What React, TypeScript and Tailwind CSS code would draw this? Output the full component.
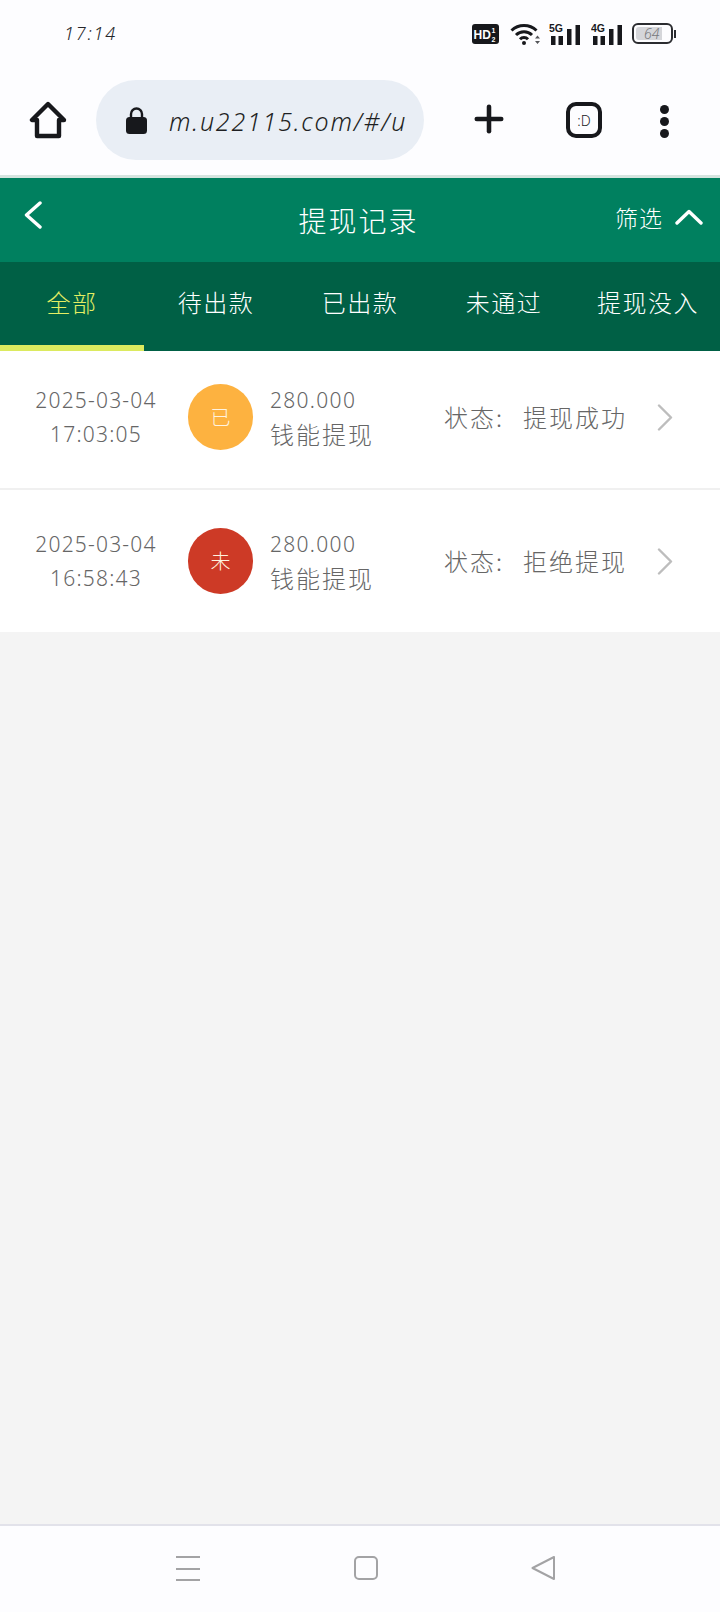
import { Plus } from 'lucide-react';

const cjk = '[font-family:"Noto_Sans_CJK_SC","Liberation_Sans",sans-serif]';

const tabs = ['全部', '待出款', '已出款', '未通过', '提现没入'];

const records = [
  { date: '2025-03-04', time: '17:03:05', badge: '已', color: 'bg-[#fdb240]', amount: '280.000', status: '提现成功', rowClass: 'h-[139px] pb-[5px] border-b-2 border-[#f0f0f0]' },
  { date: '2025-03-04', time: '16:58:43', badge: '未', color: 'bg-[#cd3a26]', amount: '280.000', status: '拒绝提现', rowClass: 'h-[142px]' },
];

function SignalIcon({ label }: { label: string }) {
  return (
    <svg width="32" height="24" viewBox="0 0 32 24" fill="#17181c">
      <text x="0" y="10" fontSize="10.5" fontWeight="700" fontFamily="Liberation Sans">
        {label}
      </text>
      <rect x="2" y="14" width="4.5" height="9" />
      <rect x="9.5" y="14" width="4.5" height="9" />
      <rect x="18" y="7" width="4.5" height="16" />
      <rect x="26.5" y="3" width="4.5" height="20" />
    </svg>
  );
}

function StatusBar() {
  return (
    <div className="flex h-[66px] items-center justify-between pl-[64px] pr-[44px] pt-[1px]">
      <span className="text-[18px] font-light italic tracking-[1.8px] text-[#25262a] [font-family:'Noto_Sans',sans-serif]">17:14</span>
      <div className="flex items-center">
        <svg width="27" height="22" viewBox="0 0 27 22">
          <rect width="27" height="20" y="1" rx="3" fill="#17181c" />
          <text x="1.5" y="15.5" fontSize="12" fontWeight="700" fill="#fff" fontFamily="Liberation Sans">HD</text>
          <text x="19.5" y="9.5" fontSize="7" fontWeight="700" fill="#fff" fontFamily="Liberation Sans">1</text>
          <text x="19.5" y="18.5" fontSize="7" fontWeight="700" fill="#fff" fontFamily="Liberation Sans">2</text>
        </svg>
        <svg className="ml-[11px]" width="31" height="24" viewBox="0 0 31 24" fill="none" stroke="#17181c" strokeWidth="3">
          <path d="M1.5 8.5a18 18 0 0 1 25 0" />
          <path d="M6 13a11.5 11.5 0 0 1 16 0" />
          <path d="M10 17.2a5.5 5.5 0 0 1 8 0" />
          <circle cx="14" cy="21" r="2" fill="#17181c" stroke="none" />
          <path d="M25 16.5l2.5-3 2.5 3zM25 19l2.5 3 2.5-3z" fill="#55565a" stroke="none" />
        </svg>
        <div className="ml-[8px]">
          <SignalIcon label="5G" />
        </div>
        <div className="ml-[10px]">
          <SignalIcon label="4G" />
        </div>
        <div className="relative ml-[9px] flex h-[21px] w-[41px] items-center rounded-[6px] border-2 border-[#2b2c30] p-[2px]">
          <div className="h-full w-[26px] rounded-l-[3px] bg-[#d5d6da]" />
          <span className="absolute left-[10px] top-[-2px] text-[14px] font-light italic text-[#77787c] [font-family:'Noto_Sans',sans-serif]">64</span>
        </div>
        <div className="ml-[1px] h-[8px] w-[2px] bg-[#2b2c30]" />
      </div>
    </div>
  );
}

function BrowserBar() {
  return (
    <div className="flex h-[112px] items-start border-b-[3px] border-[#d5e4df] pl-[29px] pt-[14px]">
      <svg className="mt-[21px]" width="38" height="38" viewBox="0 0 38 38" fill="none" stroke="#17181c" strokeWidth="4.4" strokeLinejoin="round">
        <path d="M19 3 3 19h5v16h22V19h5z" />
      </svg>
      <div className="ml-[29px] flex h-[80px] w-[328px] items-center rounded-[40px] bg-[#e9eef5] pl-[30px]">
        <svg width="21" height="27" viewBox="0 0 21 27">
          <path d="M5 12V7a5.5 5.5 0 0 1 11 0v5" fill="none" stroke="#17181c" strokeWidth="2.4" />
          <rect y="10" width="21" height="17" rx="3.5" fill="#17181c" />
        </svg>
        <span className="ml-[22px] mt-[4px] whitespace-nowrap text-[25px] font-light italic tracking-[1.8px] text-[#1e1f23] [font-family:'Noto_Sans',sans-serif]">m.u22115.com/#/u</span>
      </div>
      <Plus className="ml-[44px] mt-[18px] text-[#17181c]" size={42} strokeWidth={2.6} />
      <div className="ml-[56px] mt-[22px] flex h-[36px] w-[36px] items-center justify-center rounded-[10px] border-4 border-[#17181c] text-[14px] font-light text-[#17181c] [font-family:'Noto_Sans',sans-serif]">
        :D
      </div>
      <div className="ml-[58px] mt-[25px] flex flex-col gap-[3px]">
        <div className="h-[9px] w-[9px] rounded-full bg-[#17181c]" />
        <div className="h-[9px] w-[9px] rounded-full bg-[#17181c]" />
        <div className="h-[9px] w-[9px] rounded-full bg-[#17181c]" />
      </div>
    </div>
  );
}

function RecordRow({ record }: { record: (typeof records)[number] }) {
  return (
    <div className={`flex items-center bg-white ${record.rowClass}`}>
      <div className="flex w-[188px] flex-col items-center pl-[4px] text-[21px] font-light leading-[34px] tracking-[1.2px] text-[#666] [font-family:'Noto_Sans',sans-serif]">
        <span>{record.date}</span>
        <span>{record.time}</span>
      </div>
      <div className={`flex h-[66px] w-[65px] items-center justify-center rounded-full text-[20px] font-light text-[#fff3df] ${record.color}`}>
        {record.badge}
      </div>
      <div className="ml-[17px] flex w-[174px] flex-col text-[#666]">
        <span className="text-[21px] font-light leading-[34px] tracking-[1.3px] [font-family:'Noto_Sans',sans-serif]">{record.amount}</span>
        <span className="text-[24px] font-light leading-[34px] tracking-[2px]">钱能提现</span>
      </div>
      <div className="flex w-[213px] items-center whitespace-nowrap text-[24px] font-light tracking-[2px] text-[#666]">
        <span className="w-[79px]">状态:</span>
        <span>{record.status}</span>
      </div>
      <svg width="16" height="27" viewBox="0 0 16 27" fill="none" stroke="#bdbdbd" strokeWidth="2.4" strokeLinecap="round" strokeLinejoin="round">
        <path d="M2 1.5 14 13.5 2 25.5" />
      </svg>
    </div>
  );
}

export default function App() {
  return (
    <div className={`flex h-[1612px] w-[720px] flex-col overflow-hidden bg-[#fdfdff] ${cjk}`}>
      <StatusBar />
      <BrowserBar />

      <div className="flex h-[84px] items-center justify-between bg-[#00805f] pl-[24px] pr-[17px] text-white">
        <svg className="mb-[10px]" width="18" height="28" viewBox="0 0 18 28" fill="none" stroke="#fff" strokeWidth="3.4" strokeLinecap="round" strokeLinejoin="round">
          <path d="M16 2 2.5 14 16 26" />
        </svg>
        <span className="pl-[60px] text-[28px] font-light tracking-[2px]">提现记录</span>
        <div className="mb-[6px] flex items-center">
          <span className="text-[23px] font-light tracking-[1px]">筛选</span>
          <svg className="ml-[12px]" width="28" height="16" viewBox="0 0 28 16" fill="none" stroke="#fff" strokeWidth="3.4" strokeLinecap="round" strokeLinejoin="round">
            <path d="M2 14 14 2.5 26 14" />
          </svg>
        </div>
      </div>

      <div className="flex h-[89px] bg-[#006045]">
        {tabs.map((tab, i) => (
          <div
            key={tab}
            className={`flex flex-1 items-center justify-center whitespace-nowrap border-b-[6px] pb-[4px] text-[24px] font-light tracking-[1.5px] ${
              i === 0 ? 'border-[#dcea5f] text-[#e4ee63]' : 'border-transparent text-white'
            }`}
          >
            {tab}
          </div>
        ))}
      </div>

      {records.map((record) => (
        <RecordRow key={record.time} record={record} />
      ))}

      <div className="flex-1 bg-[#f4f4f4]" />

      <div className="flex h-[88px] items-start border-t-2 border-[#e2e2ea] pl-[176px] pt-[30px]">
        <div className="flex h-[25px] w-[24px] flex-col justify-between">
          <div className="h-[2px] bg-[#a3a3a5]" />
          <div className="h-[2px] bg-[#a3a3a5]" />
          <div className="h-[2px] bg-[#a3a3a5]" />
        </div>
        <div className="ml-[154px] h-[24px] w-[24px] rounded-[5px] border-2 border-[#a3a3a5]" />
        <svg className="ml-[153px]" width="24" height="24" viewBox="0 0 24 24" fill="none" stroke="#a3a3a5" strokeWidth="2" strokeLinejoin="round">
          <path d="M1.5 12 23 1v22z" />
        </svg>
      </div>
    </div>
  );
}
